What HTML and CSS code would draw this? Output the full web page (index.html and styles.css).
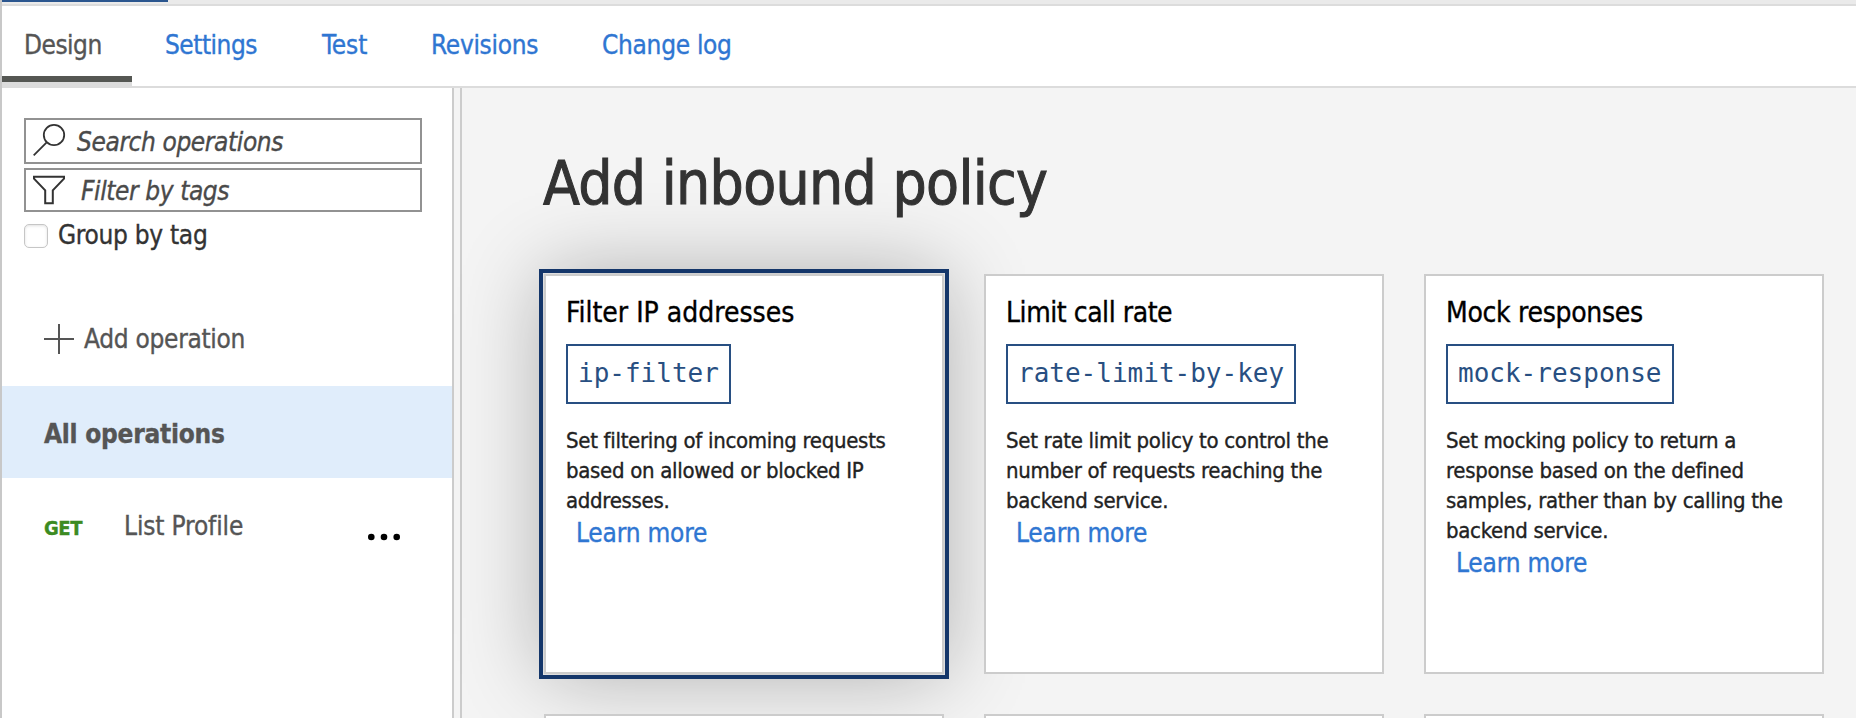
FILE: index.html
```
<!DOCTYPE html>
<html lang="en">
<head>
<meta charset="utf-8">
<title>Add inbound policy</title>
<link rel="stylesheet" href="styles.css">
</head>
<body>
<div class="app">
  <div class="strip"><div class="strip-active"></div></div>
  <nav class="tabs">
    <a class="tab tab-design">Design</a>
    <a class="tab tab-settings">Settings</a>
    <a class="tab tab-test">Test</a>
    <a class="tab tab-revisions">Revisions</a>
    <a class="tab tab-log">Change log</a>
  </nav>
  <div class="body">
    <aside class="sidebar">
      <div class="filters">
        <div class="field search">
          <svg class="field-icon" width="34" height="34" viewBox="0 0 34 34" fill="none" stroke="#333" stroke-width="1.8"><circle cx="22" cy="13" r="10.2"/><path d="M14.700 20.300 1.700 33.300"/></svg>
          <span class="search-text">Search operations</span>
        </div>
        <div class="field tags">
          <svg class="field-icon" width="34" height="34" viewBox="0 0 34 34" fill="none" stroke="#333" stroke-width="2"><path d="M2 2.800h30v1.800L20.800 16.400v12.800h-7.600v-12.800L2 4.600z"/></svg>
          <span class="tags-text">Filter by tags</span>
        </div>
        <label class="group"><span class="check"></span><span>Group by tag</span></label>
      </div>
      <div class="op add">
        <svg class="plus" width="30" height="30" viewBox="0 0 30 30" stroke="#555" stroke-width="2"><path d="M15 0v30M0 15h30"/></svg>
        <span>Add operation</span>
      </div>
      <div class="op all">All operations</div>
      <div class="op item">
        <span class="verb">GET</span>
        <span class="op-name">List Profile</span>
        <svg class="more" width="34" height="8" viewBox="0 0 34 8" fill="#000"><circle cx="4.300" cy="4" r="3.300"/><circle cx="17" cy="4" r="3.300"/><circle cx="29.700" cy="4" r="3.300"/></svg>
      </div>
    </aside>
    <div class="gutter"></div>
    <main class="main">
      <h1 class="title">Add inbound policy</h1>
      <div class="cards">
        <section class="card selected">
          <h2 class="card-title title-filter">Filter IP addresses</h2>
          <code class="code">ip-filter</code>
          <p class="desc">Set filtering of incoming requests<br>based on allowed or blocked IP<br>addresses.</p>
          <a class="learn">Learn more</a>
        </section>
        <section class="card">
          <h2 class="card-title title-limit">Limit call rate</h2>
          <code class="code">rate-limit-by-key</code>
          <p class="desc">Set rate limit policy to control the<br>number of requests reaching the<br>backend service.</p>
          <a class="learn">Learn more</a>
        </section>
        <section class="card">
          <h2 class="card-title">Mock responses</h2>
          <code class="code">mock-response</code>
          <p class="desc">Set mocking policy to return a<br>response based on the defined<br>samples, rather than by calling the<br>backend service.</p>
          <a class="learn">Learn more</a>
        </section>
        <section class="card"></section>
        <section class="card"></section>
        <section class="card"></section>
      </div>
    </main>
  </div>
</div>
</body>
</html>
```
FILE: styles.css
```
* { box-sizing: border-box; }
body {
  margin: 0;
  font-family: "DejaVu Sans Condensed", "DejaVu Sans", sans-serif;
  font-size: 26px;
  letter-spacing: -0.3px;
  color: #555;
  background: #fff;
  overflow: hidden;
  -webkit-text-stroke: 0.35px currentColor;
}
.app {
  display: flex;
  flex-direction: column;
  height: 718px;
  border-left: 2px solid #c8c8c8;
  white-space: nowrap;
  overflow: hidden;
}
.strip {
  height: 6px;
  flex: none;
  background: #eaeaea;
  border-bottom: 2px solid #dcdcdc;
}
.strip-active { width: 166px; height: 2px; background: #2b568f; }

.tabs {
  display: flex;
  flex: none;
  height: 82px;
  line-height: 78px;
  border-bottom: 2px solid #dcdcdc;
  color: #2f76d2;
}
.tab-design {
  width: 130px;
  height: 80px;
  padding-left: 22px;
  color: #555;
  letter-spacing: -0.5px;
  background: linear-gradient(#fff 70px, #555753 70px, #555753 76px, #dcdcdc 76px);
}
.tab-settings { width: 157px; padding-left: 33px; letter-spacing: -0.5px; }
.tab-test { width: 109px; padding-left: 33px; letter-spacing: -0.1px; }
.tab-revisions { width: 170px; padding-left: 33px; }
.tab-log { padding-left: 34px; letter-spacing: -0.3px; }

.body { display: flex; flex: 1; min-height: 0; }
.sidebar { width: 450px; flex: none; }
.gutter {
  width: 10px;
  flex: none;
  background: #f4f4f4;
  border-left: 2px solid #ccc;
  border-right: 2px solid #ccc;
}
.filters { padding: 30px 30px 0 22px; height: 206px; }
.field {
  display: flex;
  border: 2px solid #929292;
  color: #4a4a4a;
  font-style: italic;
}
.field-icon { flex: none; margin-left: 6px; }
.search { height: 46px; line-height: 44px; margin-bottom: 4px; }
.search .field-icon { margin-top: 2px; }
.search-text { margin-left: 11px; letter-spacing: -0.4px; }
.tags { height: 44px; line-height: 42px; }
.tags .field-icon { margin-top: 4px; }
.tags-text { margin-left: 15px; letter-spacing: -0.4px; }
.group {
  display: flex;
  height: 34px;
  line-height: 34px;
  margin-top: 6px;
  color: #333;
}
.check {
  width: 24px;
  height: 24px;
  margin: 6px 10px 0 0;
  border: 1px solid #c6c6c6;
  border-radius: 5px;
  background: #fff;
  box-shadow: inset 0 1px 3px rgba(0, 0, 0, 0.12);
}

.op { height: 92px; padding: 4px 42px 0; line-height: 88px; }
.add { display: flex; padding-top: 1px; }
.plus { margin: 29px 10px 0 0; }
.all { background: #e0edfb; font-weight: bold; letter-spacing: -0.25px; line-height: 88px; }
.item { display: flex; align-items: baseline; letter-spacing: -0.15px; }
.verb {
  width: 80px;
  font-size: 20px;
  font-weight: bold;
  letter-spacing: -0.4px;
  color: #3c8b22;
}
.more { align-self: flex-start; margin: 51px 9px 0 auto; }

.main { flex: 1; min-width: 0; padding: 60px 32px 0 82px; background: #f4f4f4; }
.title {
  margin: 0 0 56px -1px;
  font-size: 60px;
  font-weight: normal;
  line-height: 70px;
  letter-spacing: -0.7px;
  color: #333;
  -webkit-text-stroke-width: 1px;
}
.cards { display: grid; grid-template-columns: repeat(3, 400px); gap: 40px; }
.card {
  height: 400px;
  padding: 21px 20px 20px;
  border: 2px solid #ccc;
  background: #fff;
}
.selected {
  outline: 4px solid #14366a;
  outline-offset: 1px;
  box-shadow: 0 0 80px rgba(0, 0, 0, 0.3);
}
.card-title {
  margin: 0 0 15px;
  font-size: 28px;
  font-weight: normal;
  line-height: 32px;
  color: #000;
}
.title-filter { letter-spacing: 0; }
.title-limit { letter-spacing: -0.45px; }
.code {
  display: block;
  width: max-content;
  height: 60px;
  padding: 0 10px;
  border: 2px solid #284f82;
  font: 26px/54px "DejaVu Sans Mono", monospace;
  letter-spacing: 0;
  color: #284f82;
  -webkit-text-stroke-width: 0;
}
.desc {
  margin: 22px 0 0;
  font-size: 22px;
  line-height: 30px;
  letter-spacing: -0.3px;
  color: #222;
}
.learn {
  display: block;
  margin: -1px 0 0 10px;
  line-height: 36px;
  letter-spacing: -0.2px;
  color: #2f76d2;
}
```
